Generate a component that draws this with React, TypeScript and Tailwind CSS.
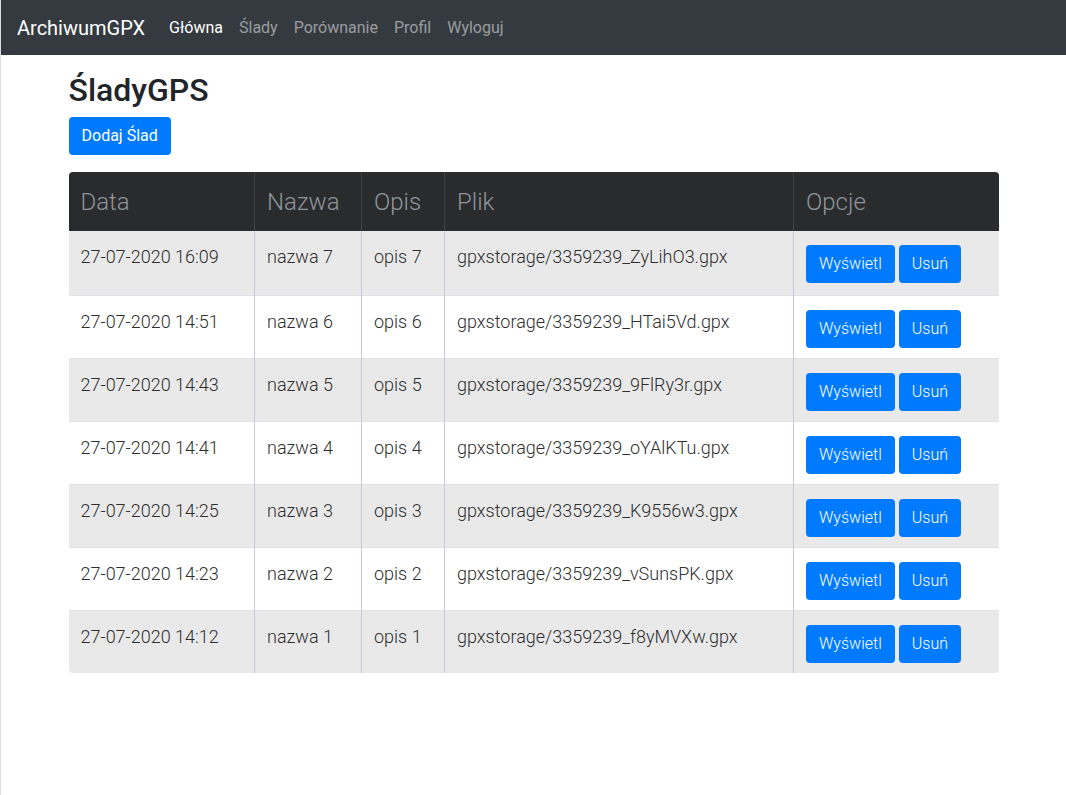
import React from 'react';

const rows = [
	{ date: '27-07-2020 16:09', name: 'nazwa 7', desc: 'opis 7', file: 'gpxstorage/3359239_ZyLihO3.gpx' },
	{ date: '27-07-2020 14:51', name: 'nazwa 6', desc: 'opis 6', file: 'gpxstorage/3359239_HTai5Vd.gpx' },
	{ date: '27-07-2020 14:43', name: 'nazwa 5', desc: 'opis 5', file: 'gpxstorage/3359239_9FlRy3r.gpx' },
	{ date: '27-07-2020 14:41', name: 'nazwa 4', desc: 'opis 4', file: 'gpxstorage/3359239_oYAlKTu.gpx' },
	{ date: '27-07-2020 14:25', name: 'nazwa 3', desc: 'opis 3', file: 'gpxstorage/3359239_K9556w3.gpx' },
	{ date: '27-07-2020 14:23', name: 'nazwa 2', desc: 'opis 2', file: 'gpxstorage/3359239_vSunsPK.gpx' },
	{ date: '27-07-2020 14:12', name: 'nazwa 1', desc: 'opis 1', file: 'gpxstorage/3359239_f8yMVXw.gpx' },
];

const links = ['Główna', 'Ślady', 'Porównanie', 'Profil', 'Wyloguj'];

const Navbar: React.FC = () => (
	<nav className="flex items-center h-[55px] bg-[#343a40] px-4">
		<span className="text-white text-[20px] mr-4">ArchiwumGPX</span>
		<ul className="flex">
			{links.map((l, i) => (
				<li key={l}>
					<a className={`block px-2 text-base ${i === 0 ? 'text-white' : 'text-white/50'}`} href="#">{l}</a>
				</li>
			))}
		</ul>
	</nav>
);

const Btn: React.FC<{ children: React.ReactNode; light?: boolean }> = ({ children, light }) => (
	<button className={`h-[38px] px-[13px] rounded bg-[#007bff] text-white text-base ${light ? 'font-light' : ''}`}>{children}</button>
);

export default function App() {
	return (
		<div className="min-h-[795px] border-l border-[#dcdcdc] bg-white" style={{ fontFamily: 'Roboto, "Liberation Sans", sans-serif' }}>
			<Navbar />
			<div className="w-[930px] mx-auto">
				<h2 className="mt-[16px] mb-2 text-[32px] leading-[1.2] font-medium text-[#212529]">ŚladyGPS</h2>
				<Btn>Dodaj Ślad</Btn>
				<div className="mt-[17px] rounded overflow-hidden">
					<table className="w-full border-collapse text-[18px] font-light text-[#2e2e2e]">
						<thead>
							<tr className="h-[59px] bg-[#2a2b2d] text-[#8e959b] text-2xl text-left">
								<th className="w-[186px] px-3 font-light border-r border-[#3e4145]">Data</th>
								<th className="w-[107px] px-3 font-light border-r border-[#3e4145]">Nazwa</th>
								<th className="w-[83px] px-3 font-light border-r border-[#3e4145]">Opis</th>
								<th className="w-[349px] px-3 font-light border-r border-[#3e4145]">Plik</th>
								<th className="px-3 font-light">Opcje</th>
							</tr>
						</thead>
						<tbody>
							{rows.map((r, i) => (
								<tr key={r.file} className={`h-[63px] align-top border-t border-[#dee2e6] first:border-t-0 first:h-[64px] ${i % 2 === 0 ? 'bg-[#e9e9e9]' : 'bg-white'}`}>
									<td className="px-3 pt-[12px] border-r border-[#c9c8d8]">{r.date}</td>
									<td className="px-3 pt-[12px] border-r border-[#c9c8d8]">{r.name}</td>
									<td className="px-3 pt-[12px] border-r border-[#c9c8d8]">{r.desc}</td>
									<td className="px-3 pt-[12px] border-r border-[#c9c8d8]">{r.file}</td>
									<td className="px-3 pt-[14px]">
										<div className="flex gap-1">
											<Btn light>Wyświetl</Btn>
											<Btn light>Usuń</Btn>
										</div>
									</td>
								</tr>
							))}
						</tbody>
					</table>
				</div>
			</div>
		</div>
	);
}
